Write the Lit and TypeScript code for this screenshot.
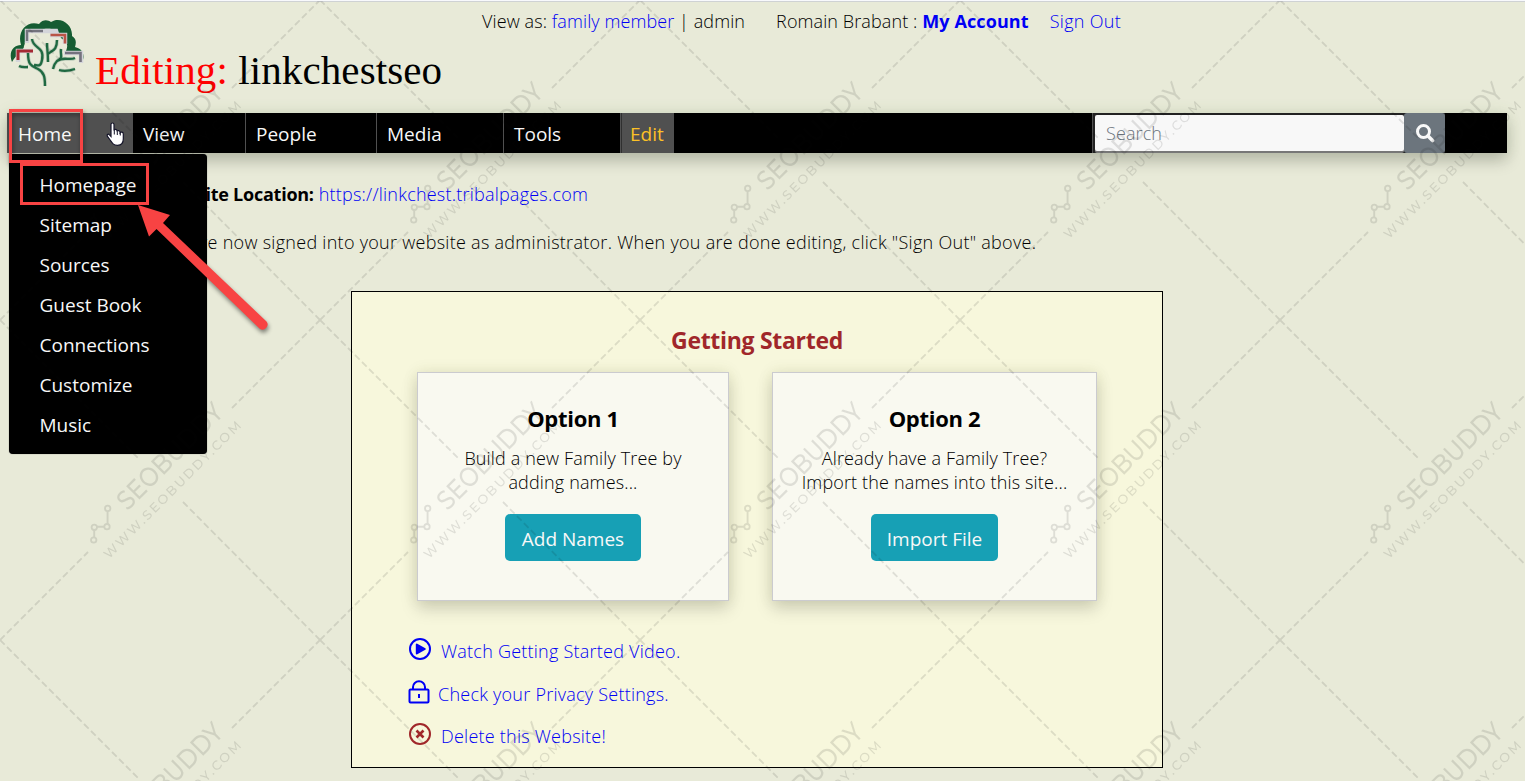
import { LitElement, html, css, svg } from "lit";
import { customElement } from "lit/decorators.js";

const MENU = ["Homepage", "Sitemap", "Sources", "Guest Book", "Connections", "Customize", "Music"];
const TILE = 320;
const TILES = [0, 1, 2].flatMap((row) => [0, 1, 2, 3, 4].map((col) => [col * TILE, row * TILE]));

const stamp = ([x, y]: number[]) => svg`
  <g transform="translate(${x} ${y})">
    <path d="M0 0L138 138M183 182L320 320M0 320L88 232M232 88L320 0" stroke-width="1.8" stroke-dasharray="6.6 3.3"/>
    <path d="M107.6 191V204M104.3 206.8H97M94.2 210V217.3" stroke-width="1.9"/>
    <g stroke-width="1.8"><circle cx="107.7" cy="188.4" r="2.7"/><circle cx="107" cy="206.7" r="2.7"/><circle cx="94.3" cy="207.3" r="2.7"/><circle cx="93.7" cy="220" r="2.7"/></g>
    <text class="wm" transform="translate(127.500 191.500) rotate(-45)" font-size="27" textLength="138" lengthAdjust="spacingAndGlyphs" fill="#111" stroke="none">SEOBUDDY</text>
    <text class="wm" transform="translate(109 239.500) rotate(-45)" font-size="13" textLength="188" fill="#111" stroke="none">WWW.SEOBUDDY.COM</text>
  </g>`;

const BRANCHES = "M32 39C33 49 45 46 42 60C41 66 39 66 34 65M28 53C28 66 32 66 38 69C44 72 45 77 45 86M47 43C47 50 48 52 48 62M57 40C57 51 52 50 48 54M61 49C60 56 64 57 57 61Q54 64 53 69M57 61C64 56 69 61 75 58M19 66C23 68 26 67 28 67M59 70Q66 72 75 69";

@customElement("app-root")
export class AppRoot extends LitElement {
  static styles = css`
    * { box-sizing: border-box; }
    :host {
      display: block; position: relative; width: 1525px; height: 781px; overflow: hidden;
      background: #e8ead8; border-top: 1px solid #f8f9fc; color: #000;
      font: 350 18px/24px "Open Sans", "Noto Sans", sans-serif;
    }
    .edge { height: 1px; background: #cfd2d4; }
    a { color: #0000f5; text-decoration: none; }
    .top { display: flex; padding-left: 10px; height: 111px; }
    .logo { width: 75px; height: 70px; margin-top: 16px; flex: none; }
    .title { margin: 44px 0 0 10px; font: 400 41px/48px "Liberation Serif", serif; white-space: pre; width: 347px; height: 48px; flex: none; letter-spacing: .1px; }
    .title span { color: #f00; }
    .account { display: flex; margin-top: 7px; margin-left: 40px; white-space: pre; letter-spacing: .1px; height: 24px; }
    .account .who { margin-left: 31px; }
    .account .out { margin-left: 21px; letter-spacing: .3px; }
    .account b a { font-weight: 700; }
    nav { display: flex; margin: 0 18px 0 7px; height: 40px; background: #000; box-shadow: 0 8px 16px rgba(0,0,0,.2), 0 0 16px rgba(90,140,60,.12); }
    .item { padding-left: 10px; border-right: 1px solid #505050; color: #f8f8f8; font-weight: 400; font-size: 19px; line-height: 42px; }
    .home { width: 126px; background: #505050; border: 0; padding-left: 11px; }
    .view { width: 113px; } .people { width: 131px; } .media { width: 127px; } .tools { width: 117px; }
    .edit { width: 53px; background: #505050; color: #fdc126; border: 0; box-shadow: inset 1px 0 #303030; padding-left: 9px; }
    .search { display: flex; margin-left: 418px; border-left: 1px solid #505050; padding-left: 1px; background: #222; margin-right: auto; }
    .field { width: 309px; margin: 2px 0 2px 1px; height: 36px; background: #f8f8f8; border-radius: 2px; padding-left: 11px; color: #6c757d; line-height: 36px; box-shadow: 0 2px #777; letter-spacing: .1px; }
    .btn { width: 41px; height: 40px; background: #6c757d; border-radius: 3px; display: grid; place-items: center; }
    .intro { padding: 29px 0 0 154px; white-space: pre; }
    .intro p { margin: 0 0 24px; letter-spacing: .28px; }
    .intro p.site { letter-spacing: .22px; padding-left: 4px; }
    .intro b { font-weight: 700; letter-spacing: -.24px; }
    .panel { margin: 37px 0 0 351px; width: 812px; height: 477px; border: 1px solid #000; background: #f7f7dc; }
    h2 { margin: 34px 0 18px; font: 700 23px/28px "Open Sans", sans-serif; color: #a0272a; text-align: center; letter-spacing: -.3px; }
    .cards { display: flex; gap: 43px; padding-left: 65px; }
    .card { width: 312px; height: 229px; background: #f9f9f0; border: 1px solid #cbcbcf; box-shadow: 0 8px 16px rgba(0,0,0,.15), 0 0 14px rgba(90,100,20,.1); text-align: center; padding-top: 31px; }
    .card + .card { width: 325px; }
    h3 { margin: 0 0 14px; font: 700 22px/28px "Open Sans", sans-serif; letter-spacing: -.3px; }
    .desc { white-space: pre; height: 48px; letter-spacing: .15px; }
    .cta { display: inline-block; margin-top: 20px; height: 47px; width: 136px; border-radius: 5px; background: #17a0b5; color: #f8f8f8; font-weight: 400; font-size: 19px; line-height: 50px; }
    .card + .card .cta { width: 127px; }
    .links { padding: 38px 0 0 56px; display: flex; flex-direction: column; gap: 18.5px; }
    .link { display: flex; align-items: center; height: 24px; letter-spacing: .24px; }
    .link svg { margin-right: 9px; margin-top: -4px; fill: none; stroke: #0000f5; stroke-width: 2; }
    .link svg.lock { margin-right: 6px; }
    .link svg.del { stroke: #a0272a; }
    .menu { position: absolute; left: 9px; top: 153px; width: 198px; height: 300px; background: #000; border-radius: 4px; padding: 11px 0 0 30.5px; color: #f8f8f8; font-weight: 400; font-size: 19px; line-height: 40px; box-shadow: 0 0 1px #555; }
    .overlay { position: absolute; left: 0; top: -1px; pointer-events: none; }
    .wm { font-family: "Montserrat", "Lato", sans-serif; font-weight: 500; }
    .mark { filter: drop-shadow(1px 3px 2px rgba(0,0,0,.45)); }
  `;

  render() {
    return html`
      <div class="edge"></div>
      <div class="top">
        <svg class="logo" viewBox="10 18 75 70" fill="none">
          <path d="M12 62C8 51 14 45 21 45C17 32 26 20 39 24C43 19 48 20 51 22C60 16 73 24 72 36C77 39 76 44 75 47C84 49 85 57 82 62L79 52L66 51C69 43 66 42 61 38C59 30 52 28 44 29L28 31C24 36 26 42 24 46C24 51 17 53 12 62Z" fill="#155c32"/>
          <path d="M27 43V31H56L58 37M50 35H65V44M18 62V51H33M64 53H81V63" stroke="#d4d5da" stroke-width="4.500"/>
          <path d="M27 41V31H43" stroke="#73737c" stroke-width="2.4"/>
          <path d="M50.500 35H65V43.500" stroke="#b95546" stroke-width="2.600"/><path d="M18 60V51H33" stroke="#a52a32" stroke-width="3"/>
          <path d="M65 53H80.500V62" stroke="#75727e" stroke-width="2.600"/>
          <path d=${BRANCHES} stroke="#bccbb9" stroke-width="3.8"/>
          <path d=${BRANCHES} stroke="#1f6941" stroke-width="2.3"/>
        </svg>
        <div class="title"><span>Editing:</span> linkchestseo</div>
        <div class="account"><span>View as: <a>family member</a> | admin</span><span class="who">Romain Brabant : <b><a>My Account</a></b></span><a class="out">Sign Out</a></div>
      </div>
      <nav>
        <div class="item home">Home</div><div class="item view">View</div><div class="item people">People</div><div class="item media">Media</div><div class="item tools">Tools</div><div class="item edit">Edit</div>
        <div class="search"><div class="field">Search</div>
          <div class="btn"><svg width="20" height="20" fill="none" stroke="#f8f8f8"><circle cx="8.5" cy="8.5" r="6" stroke-width="3"/><path d="M13 13L17.500 17.500" stroke-width="3.6" stroke-linecap="round"/></svg></div></div>
      </nav>
      <div class="intro"><p class="site"><b>Website Location:</b> <a>https://linkchest.tribalpages.com</a></p><p>You are now signed into your website as administrator. When you are done editing, click "Sign Out" above.</p></div>
      <section class="panel">
        <h2>Getting Started</h2>
        <div class="cards">
          <div class="card"><h3>Option 1</h3><div class="desc">Build a new Family Tree by
adding names...</div><span class="cta">Add Names</span></div>
          <div class="card"><h3>Option 2</h3><div class="desc">Already have a Family Tree?
Import the names into this site...</div><span class="cta">Import File</span></div>
        </div>
        <div class="links">
          <div class="link"><svg width="24" height="24"><circle cx="12" cy="12" r="10"/><path d="M8.800 7.500V16.500L16.800 12Z" fill="#0000f5" stroke-linejoin="round"/></svg><a>Watch Getting Started Video.</a></div>
          <div class="link"><svg class="lock" width="24" height="24"><rect x="1.500" y="9.500" width="19" height="13" rx="1"/><path d="M5 9.500V7A6 5.700 0 0 1 17 7V9.500M11 14V18"/></svg><a>Check your Privacy Settings.</a></div>
          <div class="link"><svg class="del" width="24" height="24"><circle cx="12" cy="12" r="10"/><path d="M8.500 8.500L15.500 15.500M15.500 8.500L8.500 15.500" stroke-width="2.600"/></svg><a>Delete this Website!</a></div>
        </div>
      </section>
      <div class="menu">${MENU.map((m) => html`<div>${m}</div>`)}</div>
      <svg class="overlay" width="1525" height="781" fill="none">
        <g opacity=".11" stroke="#111">${TILES.map(stamp)}</g>
        <g class="mark">
          <rect x="10.500" y="110.500" width="71" height="51" stroke="#f84343" stroke-width="3"/>
          <rect x="21.500" y="164.500" width="126" height="39" stroke="#f84343" stroke-width="3"/>
          <path d="M138 205L170 215L163 223L266.500 321.500A5 5 0 0 1 259.500 328.500L156.500 229L149 236.500Z" fill="#f84343"/>
        </g>
        <path d="M111 136.500V124.500C111 122.500 114 122.500 114 124.500V130.500C114.300 128.800 117 129 117 130.800V131.500C117.500 130 120 130.300 120 132V132.800C121 131.500 123.300 132 123.300 134V139C123.300 143 121 145.300 117.500 145.300C113.500 145.300 112.500 143.500 110.500 140.500L107.300 136.200C106.500 134.500 108.500 133.500 109.500 134.800Z" fill="#fff" stroke="#15152a" stroke-width="1.200"/>
        <path d="M114.300 130V134.500M117.300 131.500V135M120.300 133V135.500" stroke="#15152a"/>
      </svg>
    `;
  }
}
